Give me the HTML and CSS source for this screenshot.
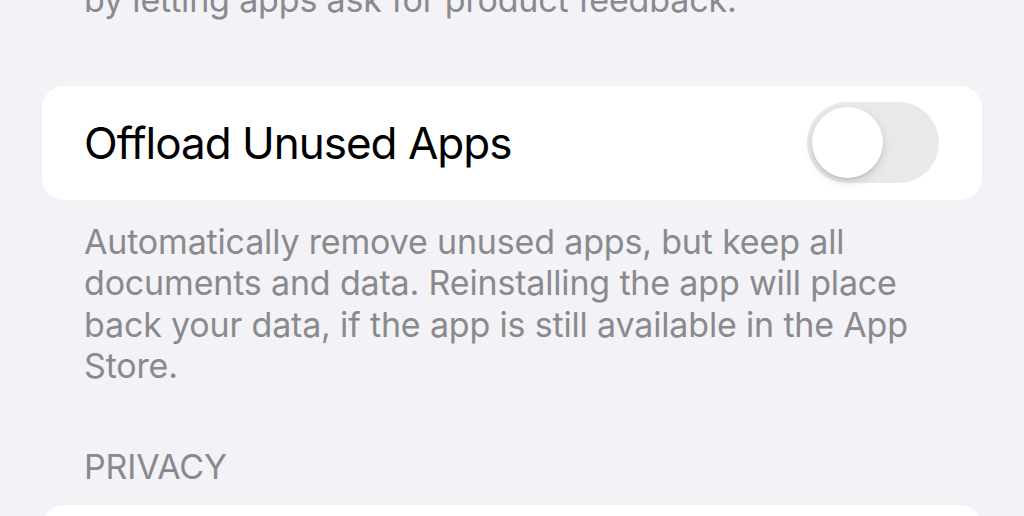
FILE: index.html
```html
<!DOCTYPE html>
<html lang="en">
<head>
<meta charset="utf-8">
<title>Settings</title>
<link rel="stylesheet" href="styles.css">
</head>
<body>
<main class="screen">
  <p class="footer footer-prev">by letting apps ask for product feedback.</p>

  <section class="card">
    <div class="row">
      <span class="row-title">Offload Unused Apps</span>
      <span class="switch" role="switch" aria-checked="false"><span class="knob"></span></span>
    </div>
  </section>

  <p class="footer footer-main">Automatically remove unused apps, but keep all documents and data. Reinstalling the app will place back your data, if the app is still available in the App Store.</p>

  <h2 class="section-header">PRIVACY</h2>

  <section class="card card-next">
    <div class="row"></div>
  </section>
</main>
</body>
</html>
```

FILE: styles.css
```css
html, body {
  margin: 0;
  padding: 0;
  background: #f2f2f7;
  height: 516px;
  overflow: hidden;
}

.screen {
  display: flex;
  flex-direction: column;
  padding: 0 42px;
  font-family: Inter, "Noto Sans", sans-serif;
}

.footer {
  margin: 0;
  padding: 0 42px;
  font-size: 34px;
  line-height: 41.5px;
  letter-spacing: -0.17px;
  color: #8a8a8e;
}

.footer-prev {
  margin-top: -21px;
}

.card {
  background: #ffffff;
  border-radius: 22px;
  margin-top: 65px;
}

.row {
  display: flex;
  align-items: center;
  justify-content: space-between;
  height: 114px;
  padding: 0 43px 0 42px;
}

.row-title {
  font-size: 44px;
  letter-spacing: -1px;
  color: #000000;
}

.switch {
  display: flex;
  align-items: center;
  width: 132px;
  height: 81px;
  padding: 0 5px;
  box-sizing: border-box;
  border-radius: 41px;
  background: #e9e9ea;
}

.knob {
  width: 71px;
  height: 71px;
  border-radius: 50%;
  background: #ffffff;
  box-shadow: 0 4px 10px rgba(0, 0, 0, 0.14), 0 2px 2px rgba(0, 0, 0, 0.06);
}

.footer-main {
  margin-top: 21px;
}

.section-header {
  margin: 59px 0 0;
  padding: 0 42px;
  font-size: 34px;
  font-weight: 400;
  line-height: 41.5px;
  letter-spacing: -0.17px;
  color: #8a8a8e;
}

.card-next {
  margin-top: 18px;
}
```
